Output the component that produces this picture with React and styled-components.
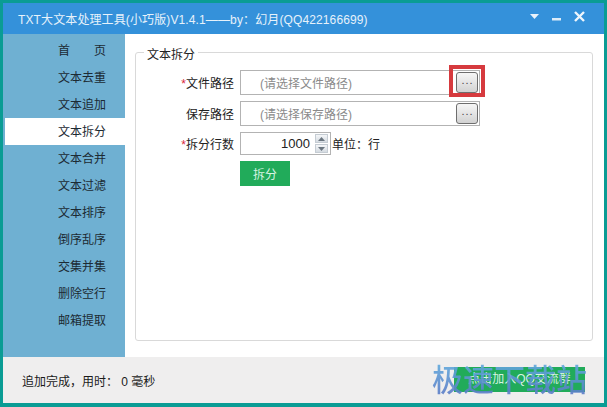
import React from "react";
import styled, { createGlobalStyle } from "styled-components";

const Global = createGlobalStyle`
  html, body { margin: 0; padding: 0; overflow: hidden; background: #0a9c94; }
  body { font-family: "Liberation Sans", "Noto Sans CJK SC", sans-serif; }
`;

const Win = styled.div`
  position: relative;
  box-sizing: border-box;
  width: 607px;
  height: 407px;
  padding: 3px 3px 4px 3px;
  background: #0a9c94;
  display: flex;
  flex-direction: column;
  color: #222;
  font-size: 12px;
`;

const TitleBar = styled.div`
  height: 31px;
  flex: none;
  background: #3491da;
  color: #e6f2fb;
  display: flex;
  align-items: center;
  padding: 0 19px 0 15px;
  font-size: 12px;
  letter-spacing: 0.12px;
`;

const TitleText = styled.div`
  flex: 1;
  white-space: nowrap;
  margin-top: -1px;
`;

const WinButtons = styled.div`
  display: flex;
  align-items: center;
  gap: 13px;
  margin-top: -5px;
`;

const Main = styled.div`
  flex: 1;
  display: flex;
  min-height: 0;
  background: #fff;
`;

const Side = styled.div`
  width: 122px;
  flex: none;
  background: #6fb0d2;
  box-sizing: border-box;
  padding: 3px 0 0 2px;
  display: flex;
  flex-direction: column;
`;

const NavItem = styled.div`
  height: 27px;
  line-height: 28px;
  padding-left: 53px;
  background: ${(p) => (p.$active ? "#fff" : "transparent")};
  color: #1c2a33;
  white-space: pre;
`;

const Content = styled.div`
  flex: 1;
  padding: 10px 11px 16px 10px;
  display: flex;
`;

const Group = styled.fieldset`
  flex: 1;
  margin: 0;
  min-width: 0;
  box-sizing: border-box;
  border: 1px solid #d9d9d9;
  border-radius: 3px;
  padding: 10px 0 0 0;
  display: flex;
  flex-direction: column;
  align-items: flex-start;
`;

const Legend = styled.legend`
  margin-left: 8px;
  padding: 0 3px;
  position: relative;
  top: 3px;
  line-height: 16px;
`;

const Row = styled.div`
  display: flex;
  align-items: center;
  height: ${(p) => p.$h}px;
  margin-bottom: 6px;
`;

const Label = styled.label`
  width: 98px;
  margin-right: 6px;
  white-space: nowrap;
  text-align: right;
`;

const Star = styled.span`
  color: #d9263a;
`;

const PathBox = styled.div`
  box-sizing: border-box;
  width: 240px;
  height: 100%;
  border: 1px solid #b3b3b3;
  display: flex;
  align-items: center;
  justify-content: space-between;
  padding: 0 1px 0 19px;
  color: #8a8a8a;
`;

const DotsButton = styled.button`
  box-sizing: border-box;
  width: 22px;
  height: 21px;
  padding: 0 0 5px 1px;
  border: 1px solid #6e6e6e;
  border-radius: 3px;
  background: linear-gradient(#f6f6f6, #d2d2d2);
  color: #444;
  font: 11px "Liberation Sans", sans-serif;
  letter-spacing: 1px;
  line-height: 10px;
`;

const SpinBox = styled.div`
  box-sizing: border-box;
  width: 91px;
  height: 100%;
  border: 1px solid #b3b3b3;
  display: flex;
  align-items: center;
  justify-content: flex-end;
  padding-right: 2px;
`;

const SpinValue = styled.span`
  font-size: 13px;
  margin-right: 5px;
`;

const SpinArrows = styled.div`
  width: 13px;
  height: 19px;
  display: flex;
  flex-direction: column;
  gap: 1px;
`;

const SpinArrow = styled.div`
  flex: 1;
  background: linear-gradient(#f4f6f8, #d5dbe1);
  border: 1px solid #c5ccd3;
  box-sizing: border-box;
  display: flex;
  align-items: center;
  justify-content: center;
`;

const Unit = styled.span`
  margin-left: 1px;
`;

const GreenButton = styled.button`
  box-sizing: border-box;
  width: 50px;
  height: 25px;
  margin-left: 104px;
  border: 0;
  background: #21ab5a;
  color: #d8f3e3;
  font: inherit;
  padding: 0;
`;

const StatusBar = styled.div`
  height: 46px;
  flex: none;
  background: #efeeee;
  display: flex;
  align-items: center;
  padding-left: 19px;
  color: #1a1a1a;
  white-space: pre;
`;

const Highlight = styled.div`
  position: absolute;
  left: 449px;
  top: 65px;
  width: 36px;
  height: 32px;
  box-sizing: border-box;
  border: 4px solid #d63a3e;
  pointer-events: none;
`;

const JoinButton = styled.div`
  position: absolute;
  left: 454px;
  top: 367px;
  width: 131px;
  height: 25px;
  background: #21ab5a;
  color: #d8f3e3;
  text-align: center;
  line-height: 25px;
`;

const Watermark = styled.div`
  position: absolute;
  left: 432px;
  top: 357px;
  font-family: "Noto Sans CJK SC", sans-serif;
  font-size: 31px;
  line-height: 42px;
  font-weight: 500;
  white-space: nowrap;
  background: linear-gradient(#62b4e2, #5a76c4);
  -webkit-background-clip: text;
  background-clip: text;
  color: transparent;
  opacity: 0.9;
`;

const navItems = ["首　　页", "文本去重", "文本追加", "文本拆分", "文本合并", "文本过滤", "文本排序", "倒序乱序", "交集并集", "删除空行", "邮箱提取"];

const Tri = ({ up }) => (
  <svg width="7" height="4" viewBox="0 0 7 4">
    <path d={up ? "M3.5 0L7 4H0z" : "M0 0h7L3.5 4z"} fill="#6b7680" />
  </svg>
);

export default function App() {
  return (
    <Win>
      <Global />
      <TitleBar>
        <TitleText>TXT大文本处理工具(小巧版)V1.4.1——by：幻月(QQ422166699)</TitleText>
        <WinButtons>
          <svg width="9" height="5" viewBox="0 0 9 5">
            <path d="M0 0h9L4.5 5z" fill="#e8f3fb" />
          </svg>
          <svg width="9" height="9" viewBox="0 0 9 9">
            <rect x="0" y="6" width="9" height="2.5" fill="#dcecf8" />
          </svg>
          <svg width="11" height="11" viewBox="0 0 11 11">
            <path d="M1 1l9 9M10 1l-9 9" stroke="#eef6fc" strokeWidth="2.4" />
          </svg>
        </WinButtons>
      </TitleBar>
      <Main>
        <Side>
          {navItems.map((t) => (
            <NavItem key={t} $active={t === "文本拆分"}>
              {t}
            </NavItem>
          ))}
        </Side>
        <Content>
          <Group>
            <Legend>文本拆分</Legend>
            <Row $h={25}>
              <Label>
                <Star>*</Star>文件路径
              </Label>
              <PathBox>
                (请选择文件路径)
                <DotsButton>...</DotsButton>
              </PathBox>
            </Row>
            <Row $h={25}>
              <Label>保存路径</Label>
              <PathBox>
                (请选择保存路径)
                <DotsButton>...</DotsButton>
              </PathBox>
            </Row>
            <Row $h={23}>
              <Label>
                <Star>*</Star>拆分行数
              </Label>
              <SpinBox>
                <SpinValue>1000</SpinValue>
                <SpinArrows>
                  <SpinArrow>
                    <Tri up />
                  </SpinArrow>
                  <SpinArrow>
                    <Tri />
                  </SpinArrow>
                </SpinArrows>
              </SpinBox>
              <Unit>单位：行</Unit>
            </Row>
            <GreenButton>拆分</GreenButton>
          </Group>
        </Content>
      </Main>
      <StatusBar>追加完成，用时： 0 毫秒</StatusBar>
      <Highlight />
      <JoinButton>点击加入QQ交流群</JoinButton>
      <Watermark>极速下载站</Watermark>
    </Win>
  );
}
